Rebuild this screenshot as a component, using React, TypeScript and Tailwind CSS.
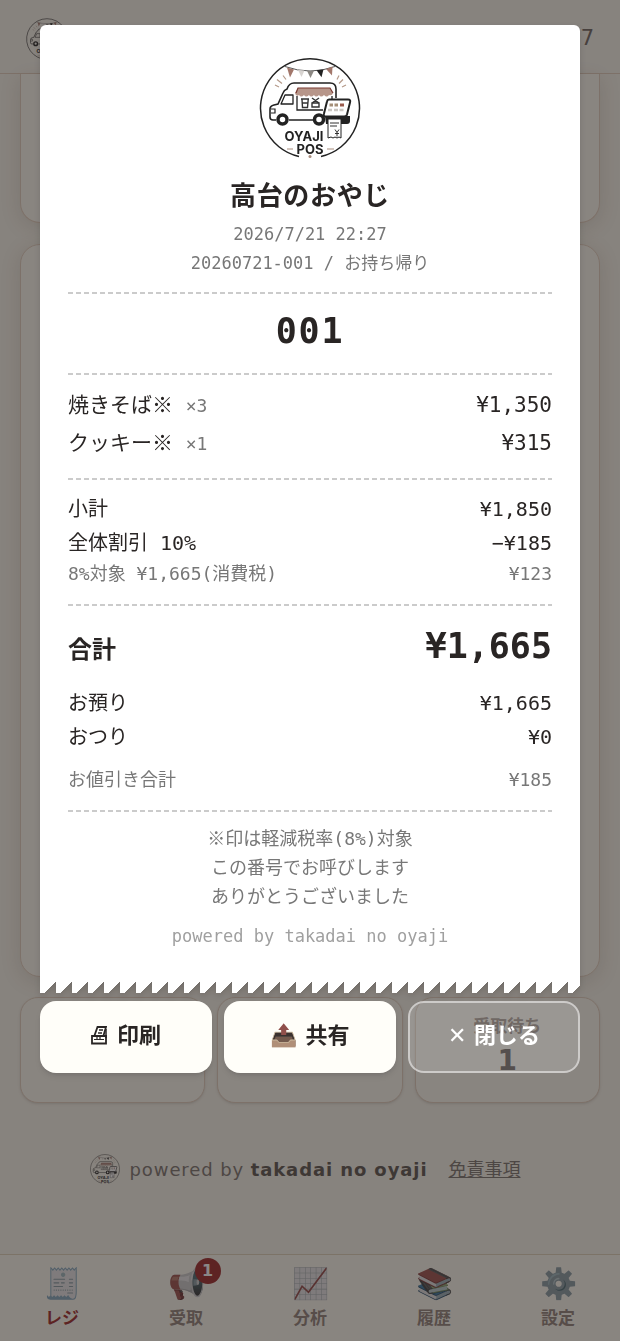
import type { ReactNode } from 'react'

const items = [
  { name: '焼きそば※', qty: '×3', price: '¥1,350' },
  { name: 'クッキー※', qty: '×1', price: '¥315' },
]

const tabs = [
  { icon: '🧾', label: 'レジ', active: true },
  { icon: '📢', label: '受取', badge: '1' },
  { icon: '📈', label: '分析' },
  { icon: '📚', label: '履歴' },
  { icon: '⚙️', label: '設定' },
]

function Logo({ className }: { className: string }) {
  return (
    <svg viewBox="0 0 102 102" className={className} fill="none" aria-hidden="true">
      <path d="M40 99.500A49.500 49.500 0 1 1 62 99.500" stroke="#222" strokeWidth="1.500" />
      <circle cx="51" cy="99.500" r="1.500" fill="#a98d7e" />
      <path d="M26 9.500q25 9 50 0" stroke="#444" strokeWidth="0.900" />
      <path d="M28 10.500l7 2-4 8z" fill="#a2776b" />
      <path d="M39 13l6.500.6-3 6.400z" fill="#d8d4d1" />
      <path d="M48 13.700h7L51.500 21z" fill="#8b8782" />
      <path d="M57.500 13.300l7-1-2 8z" fill="#222" />
      <path d="M67 12l6.500-2.500-.5 9z" fill="#a2776b" />
      <path
        d="M16 28l4 2M18 22.500l5 4M24 18.500l3 4M78 22.500l2-4M80 26.500l4-4M83 30l4-2"
        stroke="#b59a8a"
        strokeWidth="1.200"
      />
      <path
        d="M17 63h-3a3 3 0 0 1-3-3v-8q0-3 4-4l4-1 5-11q1-3 4-4 2-6 7-6h36q6 0 6 6v9M30 63h24"
        stroke="#222"
        strokeWidth="1.600"
      />
      <path d="M26 38h8v9H22z" stroke="#222" strokeWidth="1.300" strokeLinejoin="round" />
      <path d="M12 52h4v4h-4" stroke="#222" strokeWidth="1.200" />
      <path
        d="M39 31h32l3 5q-1 3-4 2-2 3-5 0-3 3-5 0-3 3-5 0-3 3-5 0-3 3-5 0-3 3-5 0-3 2-4-2z"
        fill="#b7968a"
      />
      <path d="M37 36l2-5h32l3 5" stroke="#7a3a33" strokeWidth="1.200" />
      <path d="M38 39v14h26M73 39v3" stroke="#222" strokeWidth="1.300" />
      <path
        d="M42 42h8M43 42.500l.5 8h5l.7-8M43 46h6M53 41l7 5M60 41l-7 5M53 46h7v4h-7z"
        stroke="#333"
        strokeWidth="1.400"
      />
      <circle cx="23.500" cy="62.500" r="4.500" stroke="#222" strokeWidth="3.500" />
      <circle cx="60" cy="62.500" r="4.500" stroke="#222" strokeWidth="3.500" />
      <path d="M66 59h25v5q0 3-3 3H67z" fill="#222" />
      <path
        d="M70 42.500h19q3 0 2 3l-3 12q-.6 2-3 2H67q-3 0-2-3l3-12q.4-2 2-2z"
        fill="#fff"
        stroke="#222"
        strokeWidth="2"
      />
      <path d="M70.500 48h3.500M75.500 48H79" stroke="#a58f78" strokeWidth="3" />
      <path d="M81 48h4" stroke="#9a5a4c" strokeWidth="3" />
      <path d="M69 53h4M75 53h4M80.500 53h4" stroke="#cbc7c2" strokeWidth="2.500" />
      <path d="M69 62h13v19l-2-1-2 1-2-1-2 1-2-1-3 1z" fill="#fff" stroke="#222" strokeWidth="1" />
      <path d="M71 66h9M71 69h7M76 72.500l2 3 2-3M78 75.500v4M76 76.500h4" stroke="#333" strokeWidth="1" />
      <path d="M28 92h6M68 92h7" stroke="#a98d7e" strokeWidth="1.200" />
      <text x="45" y="84" textAnchor="middle" fill="#222" fontSize="13" fontWeight="700" fontFamily="Inter, sans-serif">
        OYAJI
      </text>
      <text x="51" y="97" textAnchor="middle" fill="#222" fontSize="13" fontWeight="700" fontFamily="Inter, sans-serif">
        POS
      </text>
    </svg>
  )
}

function PrinterIcon() {
  return (
    <svg viewBox="0 0 16 20" className="h-5 w-4" fill="none" stroke="currentColor" aria-hidden="true">
      <path d="M3.500 10.500L6.500 2H15l-2.500 8.500" strokeWidth="1.800" />
      <path d="M8 5h4M7 8h4" strokeWidth="1.300" />
      <path d="M1 11h14v7.500H1z" strokeWidth="1.800" />
      <path d="M3 14.500h10M6 12v3M9 12v3" strokeWidth="1.200" />
      <path d="M15 4v9" strokeWidth="1.500" />
    </svg>
  )
}

function Divider() {
  return (
    <hr className="my-3 h-[2px] border-0 bg-[repeating-linear-gradient(to_right,#cbcbcb_0_5px,transparent_5px_8px)]" />
  )
}

function Row({ label, value, className }: { label: ReactNode; value: string; className: string }) {
  return (
    <div className={`flex items-baseline justify-between ${className}`}>
      <span>{label}</span>
      <span>{value}</span>
    </div>
  )
}

function Receipt() {
  return (
    <div className="drop-shadow-md">
      <div className="rounded-t-md bg-white px-7 pt-8 pb-8 font-['DejaVu_Sans_Mono','Noto_Sans_CJK_JP',monospace] text-[#292524]">
        <div className="pb-[2px] text-center">
          <Logo className="mx-auto size-[102px]" />
          <h1 className="mt-[17px] text-[26px] leading-10 font-bold tracking-wide">高台のおやじ</h1>
          <p className="mt-1 text-[17px] leading-[29px] text-[#777]">2026/7/21 22:27</p>
          <p className="text-[17px] leading-[29px] text-[#777]">20260721-001 / お持ち帰り</p>
        </div>
        <Divider />
        <p className="pb-[5px] text-center text-[35px] leading-[50px] font-bold tracking-wider">001</p>
        <Divider />
        <div className="flex flex-col gap-[2px] pb-[5px]">
          {items.map((item) => (
            <Row
              key={item.name}
              className="text-[21px] leading-9"
              label={
                <>
                  {item.name} <span className="text-[18px] leading-none text-[#777]">{item.qty}</span>
                </>
              }
              value={item.price}
            />
          ))}
        </div>
        <Divider />
        <div className="pb-1">
          <Row className="text-[20px] leading-[34px]" label="小計" value="¥1,850" />
          <Row className="text-[20px] leading-[34px]" label="全体割引 10%" value="−¥185" />
          <Row className="text-[18px] leading-7 text-[#777]" label="8%対象 ¥1,665(消費税)" value="¥123" />
        </div>
        <Divider />
        <div className="flex items-baseline justify-between font-bold">
          <span className="text-[24px]">合計</span>
          <span className="text-[35px] leading-14">¥1,665</span>
        </div>
        <div className="mt-3 pb-1">
          <Row className="text-[20px] leading-[34px]" label="お預り" value="¥1,665" />
          <Row className="text-[20px] leading-[34px]" label="おつり" value="¥0" />
          <Row className="mt-3 text-[18px] leading-7 text-[#777]" label="お値引き合計" value="¥185" />
        </div>
        <Divider />
        <div className="text-center text-[18px] leading-[29px] text-[#777]">
          <p>※印は軽減税率(8%)対象</p>
          <p>この番号でお呼びします</p>
          <p>ありがとうございました</p>
          <p className="mt-[11px] text-[17px] leading-7 text-[#a0a0a0]">powered by takadai no oyaji</p>
        </div>
      </div>
      <div className="h-[11px] bg-[linear-gradient(135deg,#fff_11px,transparent_11px)] bg-[length:16px_11px]" />
    </div>
  )
}

function StatCard({ label, value }: { label?: string; value?: string }) {
  return (
    <div className="h-[106px] rounded-[18px] border border-[#e3cfbc] bg-[#fdfaf0] pt-3 text-center font-bold shadow-sm">
      <p className="h-8 text-[17px] leading-8 text-[#8f7f76]">{label}</p>
      <p className="text-[28px] leading-[38px] text-[#4a403a]">{value}</p>
    </div>
  )
}

function App() {
  return (
    <div className="min-h-screen bg-[#f8f5ea] pb-[87px] font-['DejaVu_Sans','Noto_Sans_CJK_JP',sans-serif] text-[#292524]">
      <header className="flex h-[74px] items-center justify-between border-b border-[#e3cfbc] bg-[#f9f6ec] px-[26px] pt-1">
        <Logo className="size-[42px]" />
        <time className="text-[21px] text-[#6b625c]">22:27</time>
      </header>

      <main className="px-5">
        <section className="h-[149px] rounded-b-[20px] border border-t-0 border-[#e3cfbc] bg-[#fdfaf0] shadow-[0_4px_20px_rgba(90,60,40,0.16)]" />
        <section className="mt-[21px] h-[733px] rounded-[20px] border border-[#e3cfbc] bg-[#fdfaf0] shadow-[0_4px_20px_rgba(90,60,40,0.16)]" />
        <div className="mt-5 grid grid-cols-3 gap-3">
          <StatCard />
          <StatCard />
          <StatCard label="受取待ち" value="1" />
        </div>
      </main>

      <footer className="mt-[51px] flex items-center justify-center pr-[10px] text-[18px] text-[#78716c]">
        <Logo className="size-[30px]" />
        <p className="ml-[10px] tracking-wider">
          powered by <strong className="text-[#57504b]">takadai no oyaji</strong>
        </p>
        <a href="#terms" className="ml-[21px] underline">
          免責事項
        </a>
      </footer>

      <nav className="fixed inset-x-0 bottom-0 grid h-[87px] grid-cols-5 border-t border-[#e0d2b8] bg-[#fdfaf0] pt-[9px]">
        {tabs.map((tab) => (
          <button
            key={tab.label}
            type="button"
            className={`flex flex-col items-center text-[17px] leading-7 font-bold ${tab.active ? 'text-[#9c2222]' : 'text-[#8f7f76]'}`}
          >
            <span className="relative text-[30px] leading-10">
              <span className="inline-block brightness-90 saturate-50">{tab.icon}</span>
              {tab.badge && (
                <span className="absolute -top-[6px] -right-4 flex size-[26px] items-center justify-center rounded-full bg-[#9c2222] text-[16px] leading-none text-white">
                  {tab.badge}
                </span>
              )}
            </span>
            {tab.label}
          </button>
        ))}
      </nav>

      <div role="dialog" aria-modal="true" className="fixed inset-0 overflow-y-auto bg-[#292524]/55 px-10 pt-[25px]">
        <Receipt />
        <div className="mt-2 grid grid-cols-3 gap-3 text-[22px] font-bold">
          <button type="button" className="flex h-[72px] items-center justify-center gap-[10px] rounded-2xl bg-[#fffef9] pb-1 shadow-md">
            <PrinterIcon />
            印刷
          </button>
          <button type="button" className="flex h-[72px] items-center justify-center gap-2 rounded-2xl bg-[#fffef9] pb-1 shadow-md">
            <span className="brightness-90 saturate-[.4]">📤</span>
            共有
          </button>
          <button type="button" className="h-[72px] rounded-2xl border-2 border-white/50 bg-white/15 pb-1 text-white">
            ✕ 閉じる
          </button>
        </div>
      </div>
    </div>
  )
}

export default App
